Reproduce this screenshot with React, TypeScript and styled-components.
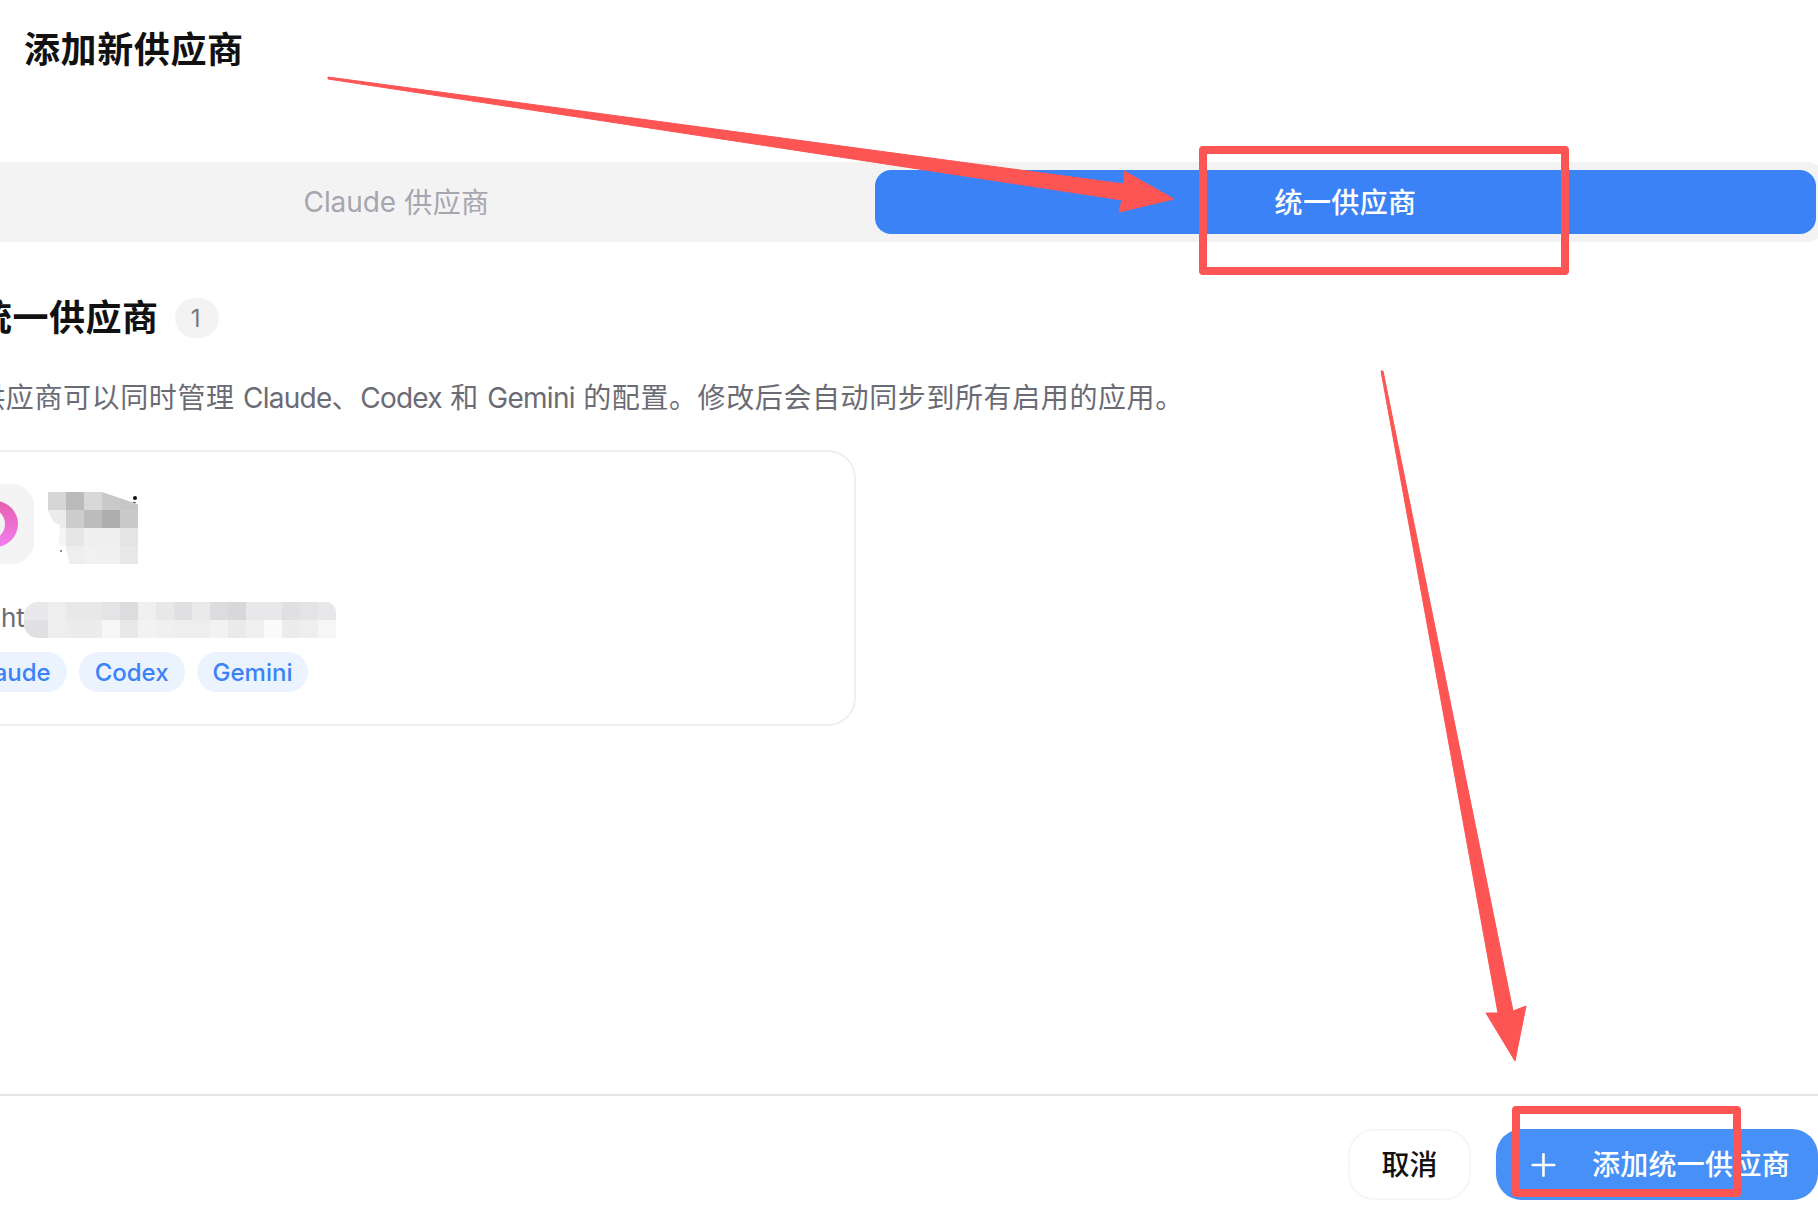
import React from 'react';
import styled, { createGlobalStyle } from 'styled-components';
import { Layers, Link2, Plus } from 'lucide-react';

const nameCells = [
  '#d6d6d6', '#bbbbbb', '#d8d8d8', '#c9c9c9', '#c6c6c6',
  '#ececec', '#cdcdcd', '#bcbcbc', '#adadad', '#c9c9c9',
  '#f5f5f5', '#e6e6e6', '#efefef', '#efefef', '#e4e4e6',
  '#ffffff', '#eeeeee', '#f1f1f1', '#f0f0f0', '#e8e8e9',
];

const urlCells = [
  '#e8e8ea', '#eeeeee', '#e8e8e8', '#e8e8e8', '#e4e4e6', '#dcdcde', '#f0f0f0', '#e8e8e8', '#e0e0e2',
  '#eaeaea', '#dcdcde', '#d8d8da', '#e8e8ea', '#e8e8ea', '#e0e0e2', '#e4e4e6', '#e8e8ea',
  '#e0e0e2', '#eeeeee', '#ececec', '#ececec', '#f6f6f6', '#e8e8e8', '#f2f2f2', '#f0f0f0', '#eeeeee',
  '#eeeeee', '#f2f2f2', '#eaeaea', '#f0f0f0', '#fafafa', '#ececec', '#eeeeee', '#f6f6f6',
];

const GlobalStyle = createGlobalStyle`
  html, body {
    margin: 0;
    padding: 0;
    background: #fff;
    font-family: Inter, "Noto Sans CJK SC", sans-serif;
  }
`;

const Page = styled.div`
  position: relative;
  width: 1818px;
  height: 1206px;
  overflow: hidden;
  display: flex;
  flex-direction: column;
  background: #fff;
`;

const Header = styled.header`
  height: 162px;
  box-sizing: border-box;
  padding: 25px 0 0 24px;
  flex-shrink: 0;
`;

const Title = styled.h1`
  margin: 0;
  font-size: 36px;
  line-height: 50px;
  font-weight: 600;
  letter-spacing: 0.6px;
  color: #111;
`;

const Main = styled.main`
  flex: 1;
  margin-left: -80px;
`;

const TabList = styled.div`
  width: 1906px;
  height: 80px;
  margin-left: -2px;
  box-sizing: border-box;
  padding: 8px;
  display: grid;
  grid-template-columns: 1fr 1fr;
  gap: 8px;
  background: #f3f3f3;
  border-radius: 16px;
`;

const Tab = styled.div<{ $active?: boolean }>`
  display: flex;
  align-items: center;
  justify-content: center;
  padding-bottom: 2px;
  border-radius: 16px;
  font-size: 28px;
  letter-spacing: 0.4px;
  white-space: pre;
  font-weight: ${p => (p.$active ? 500 : 400)};
  color: ${p => (p.$active ? '#fff' : '#a6a6ae')};
  background: ${p => (p.$active ? '#3b82f6' : 'transparent')};
  > span {
    letter-spacing: -0.1px;
    margin-top: 1px;
  }
`;

const SectionHead = styled.div`
  margin-top: 56px;
  height: 40px;
  display: flex;
  align-items: center;
`;

const SectionIcon = styled.span`
  width: 40px;
  height: 40px;
  margin-right: 16px;
  color: #3b82f6;
`;

const SectionTitle = styled.h2`
  margin: 0 0 6px;
  font-size: 36px;
  font-weight: 600;
  letter-spacing: 0.5px;
  color: #111;
  white-space: nowrap;
`;

const CountBadge = styled.span`
  margin-left: 16px;
  width: 44px;
  height: 40px;
  padding-right: 2px;
  box-sizing: border-box;
  display: flex;
  align-items: center;
  justify-content: center;
  border-radius: 20px;
  background: #f3f3f3;
  font-size: 24px;
  color: #77777f;
`;

const Description = styled.p`
  margin: 40px 0 0;
  font-size: 28px;
  line-height: 40px;
  letter-spacing: 0.6px;
  color: #6b6b75;
  white-space: nowrap;
  > span {
    letter-spacing: -0.75px;
  }
`;

const Card = styled.div`
  margin-top: 32px;
  width: 936px;
  height: 276px;
  box-sizing: border-box;
  padding: 32px;
  border: 2px solid #efefef;
  border-radius: 28px;
`;

const CardTop = styled.div`
  display: flex;
  gap: 14px;
`;

const IconBox = styled.div`
  width: 80px;
  height: 80px;
  border-radius: 22px;
  background: #f4f4f4;
  display: flex;
  align-items: center;
  justify-content: center;
  flex-shrink: 0;
`;

const NameMosaic = styled.div`
  position: relative;
  margin-top: 8px;
  align-self: flex-start;
`;

const NameGrid = styled.div`
  display: grid;
  grid-template-columns: repeat(5, 18px);
  grid-auto-rows: 18px;
  clip-path: polygon(0 0, 60% 0, 100% 17%, 100% 100%, 24% 100%, 20% 78%, 12% 72%, 13% 46%, 6% 42%, 0 26%);
`;

const Cell = styled.span<{ $c: string }>`
  background: ${p => p.$c};
`;

const Speck = styled.i<{ $x: number; $y: number; $w: number; $h: number; $c: string }>`
  position: absolute;
  left: ${p => p.$x}px;
  top: ${p => p.$y}px;
  width: ${p => p.$w}px;
  height: ${p => p.$h}px;
  border-radius: 50%;
  background: ${p => p.$c};
`;

const UrlRow = styled.div`
  margin-top: 38px;
  height: 36px;
  display: flex;
  align-items: center;
  color: #6b6b75;
  font-size: 26px;
`;

const UrlIcon = styled.span`
  width: 28px;
  height: 28px;
  margin-right: 19px;
`;

const UrlText = styled.span`
  margin-bottom: 5px;
`;

const UrlMosaic = styled.div`
  margin-left: -1px;
  display: grid;
  grid-template-columns: 24px repeat(16, 18px);
  grid-auto-rows: 18px;
  border-radius: 14px 10px 0 14px;
  overflow: hidden;
`;

const TagRow = styled.div`
  margin-top: 14px;
  display: flex;
  gap: 12px;
`;

const Tag = styled.span`
  height: 40px;
  padding: 0 16px;
  display: flex;
  align-items: center;
  border-radius: 20px;
  background: #ebf3fe;
  color: #3b82f6;
  font-size: 24px;
  font-weight: 500;
`;

const Footer = styled.footer`
  height: 112px;
  box-sizing: border-box;
  border-top: 2px solid #e5e5e5;
  padding-top: 33px;
  display: flex;
  justify-content: flex-end;
  gap: 25px;
  flex-shrink: 0;
`;

const CancelButton = styled.button`
  width: 123px;
  height: 71px;
  box-sizing: border-box;
  padding: 0 0 3px;
  border: 2px solid #f6f6f6;
  border-radius: 26px;
  background: #fff;
  color: #111;
  font: 500 28px Inter, "Noto Sans CJK SC", sans-serif;
`;

const AddLabel = styled.span`
  margin-bottom: 4px;
  letter-spacing: 0.3px;
`;

const AddButton = styled.button`
  width: 322px;
  height: 71px;
  box-sizing: border-box;
  padding: 0 28px 0 29px;
  border: 0;
  border-radius: 26px;
  background: #4790f8;
  color: #fff;
  display: flex;
  align-items: center;
  gap: 30px;
  font: 500 28px Inter, "Noto Sans CJK SC", sans-serif;
  white-space: nowrap;
`;

const Annotations = styled.svg`
  position: absolute;
  inset: 0;
  pointer-events: none;
`;

const App = () => {
  return (
    <Page>
      <GlobalStyle />
      <Header>
        <Title>添加新供应商</Title>
      </Header>
      <Main>
        <TabList>
          <Tab><span>Claude</span> 供应商</Tab>
          <Tab $active>统一供应商</Tab>
        </TabList>
        <SectionHead>
          <SectionIcon><Layers size={40} /></SectionIcon>
          <SectionTitle>统一供应商</SectionTitle>
          <CountBadge>1</CountBadge>
        </SectionHead>
        <Description>
          统一供应商可以同时管理 <span>Claude</span>、<span>Codex</span> 和 <span>Gemini</span> 的配置。修改后会自动同步到所有启用的应用。
        </Description>
        <Card>
          <CardTop>
            <IconBox>
              <svg width="62" height="62" viewBox="0 0 62 62">
                <defs>
                  <linearGradient id="ring" x1="0" y1="0" x2="0" y2="1">
                    <stop offset="0" stopColor="#e55fae" />
                    <stop offset="1" stopColor="#f27eee" />
                  </linearGradient>
                </defs>
                <path
                  fill="url(#ring)"
                  fillRule="evenodd"
                  d="M9 31a23 23 0 1 0 46 0a23 23 0 1 0-46 0ZM10 31a16 16 0 1 0 32 0a16 16 0 1 0-32 0Z"
                />
              </svg>
            </IconBox>
            <NameMosaic>
              <NameGrid>
                {nameCells.map((c, i) => <Cell key={`name-${i}`} $c={c} />)}
              </NameGrid>
              <Speck $x={85} $y={4} $w={4} $h={4} $c="#111" />
              <Speck $x={85} $y={10} $w={3} $h={1} $c="#333" />
              <Speck $x={12} $y={58} $w={2} $h={2} $c="#666" />
            </NameMosaic>
          </CardTop>
          <UrlRow>
            <UrlIcon><Link2 size={28} /></UrlIcon>
            <UrlText>ht</UrlText>
            <UrlMosaic>
              {urlCells.map((c, i) => <Cell key={`url-${i}`} $c={c} />)}
            </UrlMosaic>
          </UrlRow>
          <TagRow>
            <Tag>Claude</Tag>
            <Tag>Codex</Tag>
            <Tag>Gemini</Tag>
          </TagRow>
        </Card>
      </Main>
      <Footer>
        <CancelButton>取消</CancelButton>
        <AddButton>
          <Plus size={38} strokeWidth={1.7} />
          <AddLabel>添加统一供应商</AddLabel>
        </AddButton>
      </Footer>
      <Annotations width="1818" height="1206" viewBox="0 0 1818 1206">
        <g fill="#fd5454" stroke="#fd5454" strokeWidth="1" strokeLinejoin="round">
          <polygon points="328,77 1124,184 1124,171 1174,199 1119,212 1122,200 328,79" />
          <polygon points="1383,371 1513,1011 1526,1006 1515,1061 1486,1013 1498,1013 1381,371" />
        </g>
        <g fill="none" stroke="#fd5454" strokeWidth="8" strokeLinejoin="round">
          <rect x="1203" y="150" width="362" height="121" />
          <rect x="1516" y="1110" width="221" height="83" />
        </g>
      </Annotations>
    </Page>
  );
};

export default App;
